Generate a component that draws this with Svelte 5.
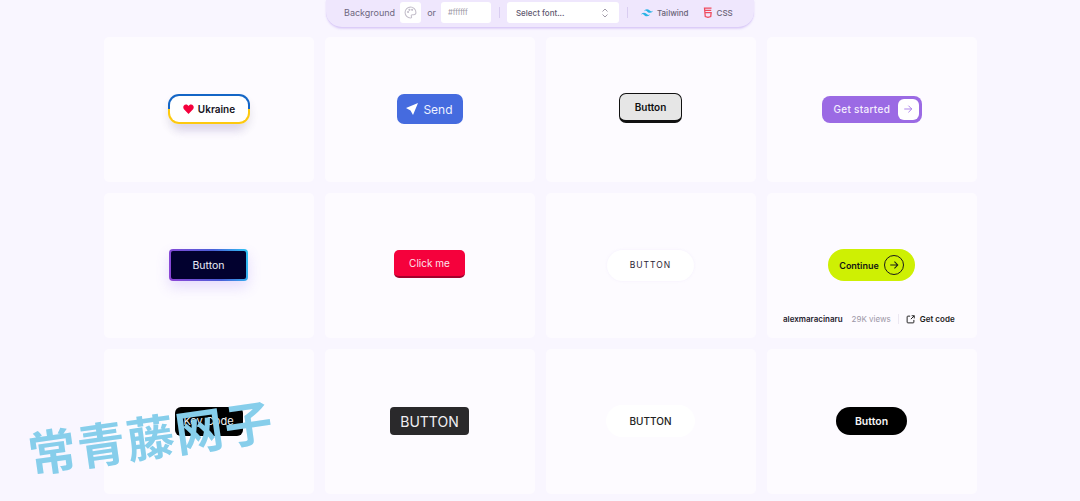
<script>
  const views = '29K views'
</script>

<div class="page">
  <div class="bar">
    <span class="lbl">Background</span>
    <span class="swatch">
      <svg width="13" height="13" viewBox="0 0 24 24" fill="none" stroke="#c4bfcb" stroke-width="2"><path d="M12 2a10 10 0 0 0 0 20c2 0 2.500-1.500 1.700-2.700-.9-1.400 0-3.300 1.800-3.300H18a4 4 0 0 0 4-4c0-5.500-4.500-10-10-10z"/><circle cx="7.500" cy="11" r="1"/><circle cx="10" cy="7" r="1"/><circle cx="15" cy="7" r="1"/></svg>
    </span>
    <span class="lbl or">or</span>
    <span class="hex">#ffffff</span>
    <i class="sep"></i>
    <span class="select">
      <span>Select font...</span>
      <svg width="8" height="10" viewBox="0 0 8 10" fill="none" stroke="#a19ca9" stroke-width="1"><path d="M1.500 3.500 4 1l2.500 2.500M1.500 6.500 4 9l2.500-2.500"/></svg>
    </span>
    <i class="sep"></i>
    <span class="link tw">
      <svg width="12" height="8" viewBox="0 0 24 15" fill="#2bb3e6"><path d="M12 0C9 0 7 1.500 6 4.500c1.200-1.500 2.500-2 4-1.700.9.200 1.500.8 2.200 1.500C13.400 5.500 14.800 7 18 7c3 0 5-1.500 6-4.500-1.200 1.500-2.500 2-4 1.700-.9-.2-1.500-.8-2.200-1.500C16.600 1.500 15.200 0 12 0zM6 7c-3 0-5 1.500-6 4.500 1.200-1.500 2.500-2 4-1.700.9.200 1.500.8 2.200 1.500C7.400 12.500 8.800 14 12 14c3 0 5-1.500 6-4.500-1.200 1.500-2.500 2-4 1.700-.9-.2-1.500-.8-2.200-1.500C10.600 8.500 9.200 7 6 7z"/></svg>
      Tailwind
    </span>
    <span class="link">
      <svg width="10" height="11" viewBox="0 0 20 22" fill="none" stroke="#ef4a5d" stroke-width="2.500"><path d="M17 2H3l1.500 17L10 20.500 15.500 19l.8-8H5M4 6.500h12.500"/></svg>
      CSS
    </span>
  </div>

  <div class="grid">
    <div class="card first">
      <button class="ukraine">
        <svg width="11" height="10" viewBox="0 0 24 22" fill="#f5013c"><path d="M12 22 2 11.500C-1 8 .5 1 6.500 1 9 1 11 2.500 12 4.500 13 2.500 15 1 17.500 1c6 0 7.500 7 4.500 10.500z"/></svg>
        Ukraine
      </button>
    </div>
    <div class="card">
      <button class="send">
        <svg width="12" height="12" viewBox="0 0 24 24" fill="#fff"><path d="M24 0 0 10l9 5 5 9z"/></svg>
        Send
      </button>
    </div>
    <div class="card shift-up"><button class="outlined">Button</button></div>
    <div class="card">
      <button class="started">
        Get started
        <span class="arrow-box">
          <svg width="10" height="10" viewBox="0 0 24 24" fill="none" stroke="#9b6ae4" stroke-width="2"><path d="M3 12h18M13 4l8 8-8 8"/></svg>
        </span>
      </button>
    </div>

    <div class="card"><button class="glow">Button</button></div>
    <div class="card shift-up"><button class="click">Click me</button></div>
    <div class="card"><button class="spaced">BUTTON</button></div>
    <div class="card featured">
      <button class="continue">
        Continue
        <span class="ring">
          <svg width="10" height="10" viewBox="0 0 24 24" fill="none" stroke="#1a1a1a" stroke-width="2.500"><path d="M3 12h18M13 4l8 8-8 8"/></svg>
        </span>
      </button>
      <div class="meta">
        <b>alexmaracinaru</b>
        <span class="views">{views}</span>
        <i class="meta-sep"></i>
        <svg width="9" height="9" viewBox="0 0 24 24" fill="none" stroke="#222" stroke-width="2.600"><path d="M11 3H5a2 2 0 0 0-2 2v14a2 2 0 0 0 2 2h14a2 2 0 0 0 2-2v-6M13 11l9-9M15 2h7v7"/></svg>
        <b class="code">Get code</b>
      </div>
    </div>

    <div class="card"><button class="kbd">Key Code</button></div>
    <div class="card"><button class="dark">BUTTON</button></div>
    <div class="card"><button class="soft">BUTTON</button></div>
    <div class="card"><button class="pill">Button</button></div>
  </div>

  <div class="mark">常青藤网子</div>
</div>

<style>
  :global(body) {
    margin: 0;
    background: #f9f6ff;
  }
  .page {
    position: relative;
    width: 1080px;
    height: 501px;
    overflow: hidden;
    font-family: Inter, "Liberation Sans", sans-serif;
    background: #f9f6ff;
  }
  button {
    border: 0;
    font-family: inherit;
    padding: 0;
    display: flex;
    align-items: center;
    justify-content: center;
  }

  .bar {
    box-sizing: border-box;
    width: 428px;
    height: 28px;
    margin: 0 auto 9px;
    display: flex;
    align-items: center;
    padding: 0 0 2px 18px;
    background: #efe7fd;
    border-bottom: 1px solid #dccdf8;
    border-radius: 0 0 16px 16px;
    box-shadow: 0 1px 2px rgba(150, 110, 230, .25);
    font-size: 9px;
    color: #6e6780;
  }
  .lbl { font-size: 9px; }
  .or { margin: 0 5px 0 6px; }
  .swatch {
    width: 21px;
    height: 21px;
    margin-left: 5px;
    background: #fff;
    border-radius: 3px;
    display: flex;
    align-items: center;
    justify-content: center;
  }
  .hex {
    width: 43px;
    height: 21px;
    padding-left: 7px;
    background: #fff;
    border-radius: 3px;
    font-size: 7.500px;
    line-height: 21px;
    color: #9a95a3;
  }
  .sep {
    width: 1px;
    height: 11px;
    margin: 0 7px 0 8px;
    background: #d9cdf1;
  }
  .select {
    box-sizing: border-box;
    width: 112px;
    height: 21px;
    padding: 0 10px 0 9px;
    background: #fff;
    border-radius: 3px;
    display: flex;
    align-items: center;
    justify-content: space-between;
    font-size: 8px;
    font-weight: 500;
    color: #5f5970;
  }
  .link {
    display: flex;
    align-items: center;
    gap: 4px;
    font-size: 8px;
    font-weight: 500;
    color: #6a6478;
  }
  .tw { margin: 0 14px 0 6px; }

  .grid {
    width: 873px;
    margin-left: 104px;
    display: grid;
    grid-template-columns: repeat(4, 210px);
    grid-auto-rows: 145px;
    gap: 11px;
  }
  .card {
    box-sizing: border-box;
    padding: 0 1px 1px 0;
    background: #fdfbff;
    border-radius: 5px;
    display: flex;
    align-items: center;
    justify-content: center;
  }
  .card.first { padding-right: 0; }
  .card.shift-up { padding-bottom: 3px; }

  .ukraine {
    box-sizing: border-box;
    width: 82px;
    height: 30px;
    gap: 4px;
    border-radius: 11px;
    border: 2px solid transparent;
    background: linear-gradient(#fff, #fff) padding-box,
      linear-gradient(#1466c6 50%, #fdc90f 50%) border-box;
    box-shadow: 0 6px 8px rgba(60, 50, 90, .12), 0 16px 10px -8px rgba(140, 110, 220, .1);
    font-size: 10px;
    font-weight: 600;
    color: #15131d;
  }
  .send {
    width: 66px;
    height: 30px;
    gap: 5px;
    border-radius: 7px;
    background: #456bdf;
    color: #eef2ff;
    font-size: 12px;
  }
  .outlined {
    width: 63px;
    height: 30px;
    border-radius: 7px;
    background: #e6e6e6;
    border: 1px solid #111;
    border-bottom-width: 3px;
    font-size: 10px;
    font-weight: 600;
    color: #111;
  }
  .started {
    box-sizing: border-box;
    width: 100px;
    height: 27px;
    padding: 0 3px 0 12px;
    justify-content: space-between;
    border-radius: 8px;
    background: #9b6ae4;
    color: #f5effe;
    font-size: 10px;
    font-weight: 500;
    letter-spacing: .3px;
  }
  .arrow-box {
    width: 21px;
    height: 21px;
    background: #fff;
    border-radius: 6px;
    display: flex;
    align-items: center;
    justify-content: center;
  }
  .glow {
    box-sizing: border-box;
    width: 79px;
    height: 32px;
    border-radius: 4px;
    border: 2px solid transparent;
    background: linear-gradient(#02012f, #02012f) padding-box,
      linear-gradient(75deg, #8f45d6, #4a60d8 60%, #2ec6f5) border-box;
    box-shadow: 0 6px 14px rgba(130, 90, 240, .2);
    color: #eceef8;
    font-size: 10.500px;
  }
  .click {
    box-sizing: border-box;
    width: 71px;
    height: 28px;
    border-radius: 5px;
    background: #f5013c;
    border-bottom: 2px solid #a3002c;
    color: #fde6ec;
    font-size: 10px;
  }
  .spaced {
    width: 87px;
    height: 31px;
    border-radius: 16px;
    background: #fff;
    box-shadow: 0 0 3px rgba(170, 140, 240, .1);
    font-size: 8.500px;
    letter-spacing: 1px;
    color: #2a2535;
  }
  .featured { position: relative; }
  .continue {
    width: 87px;
    height: 32px;
    gap: 5px;
    border-radius: 16px;
    background: #cef003;
    color: #151515;
    font-size: 9px;
    font-weight: 600;
  }
  .ring {
    width: 18px;
    height: 18px;
    border: 1px solid #1a1a1a;
    border-radius: 50%;
    display: flex;
    align-items: center;
    justify-content: center;
  }
  .meta {
    position: absolute;
    left: 16px;
    bottom: 14px;
    display: flex;
    align-items: center;
    font-size: 8px;
    white-space: nowrap;
  }
  .meta b { font-weight: 600; color: #26222e; }
  .views { margin-left: 9px; color: #9c97a6; }
  .meta-sep {
    width: 1px;
    height: 10px;
    margin: 0 7px;
    background: #ece8f2;
  }
  .meta .code { margin-left: 5px; color: #1c1c1c; }

  .kbd {
    width: 68px;
    height: 29px;
    border-radius: 6px;
    background: #000;
    color: #f3f3f3;
    font-size: 11px;
  }
  .dark {
    width: 79px;
    height: 28px;
    border-radius: 4px;
    background: #2a292b;
    color: #f1eff3;
    font-size: 14px;
  }
  .soft {
    width: 89px;
    height: 32px;
    border-radius: 16px;
    background: #fff;
    color: #222;
    font-size: 10px;
    font-weight: 500;
  }
  .pill {
    width: 71px;
    height: 28px;
    border-radius: 14px;
    background: #000;
    color: #f5f5f5;
    font-size: 10.500px;
    font-weight: 600;
  }

  .mark {
    position: absolute;
    left: 28px;
    top: 428px;
    font-family: "Noto Sans CJK SC", sans-serif;
    font-size: 48px;
    font-weight: 700;
    line-height: 1;
    color: #87ceeb;
    letter-spacing: 1.500px;
    white-space: nowrap;
    transform: rotate(-8deg);
    transform-origin: left center;
  }
</style>
